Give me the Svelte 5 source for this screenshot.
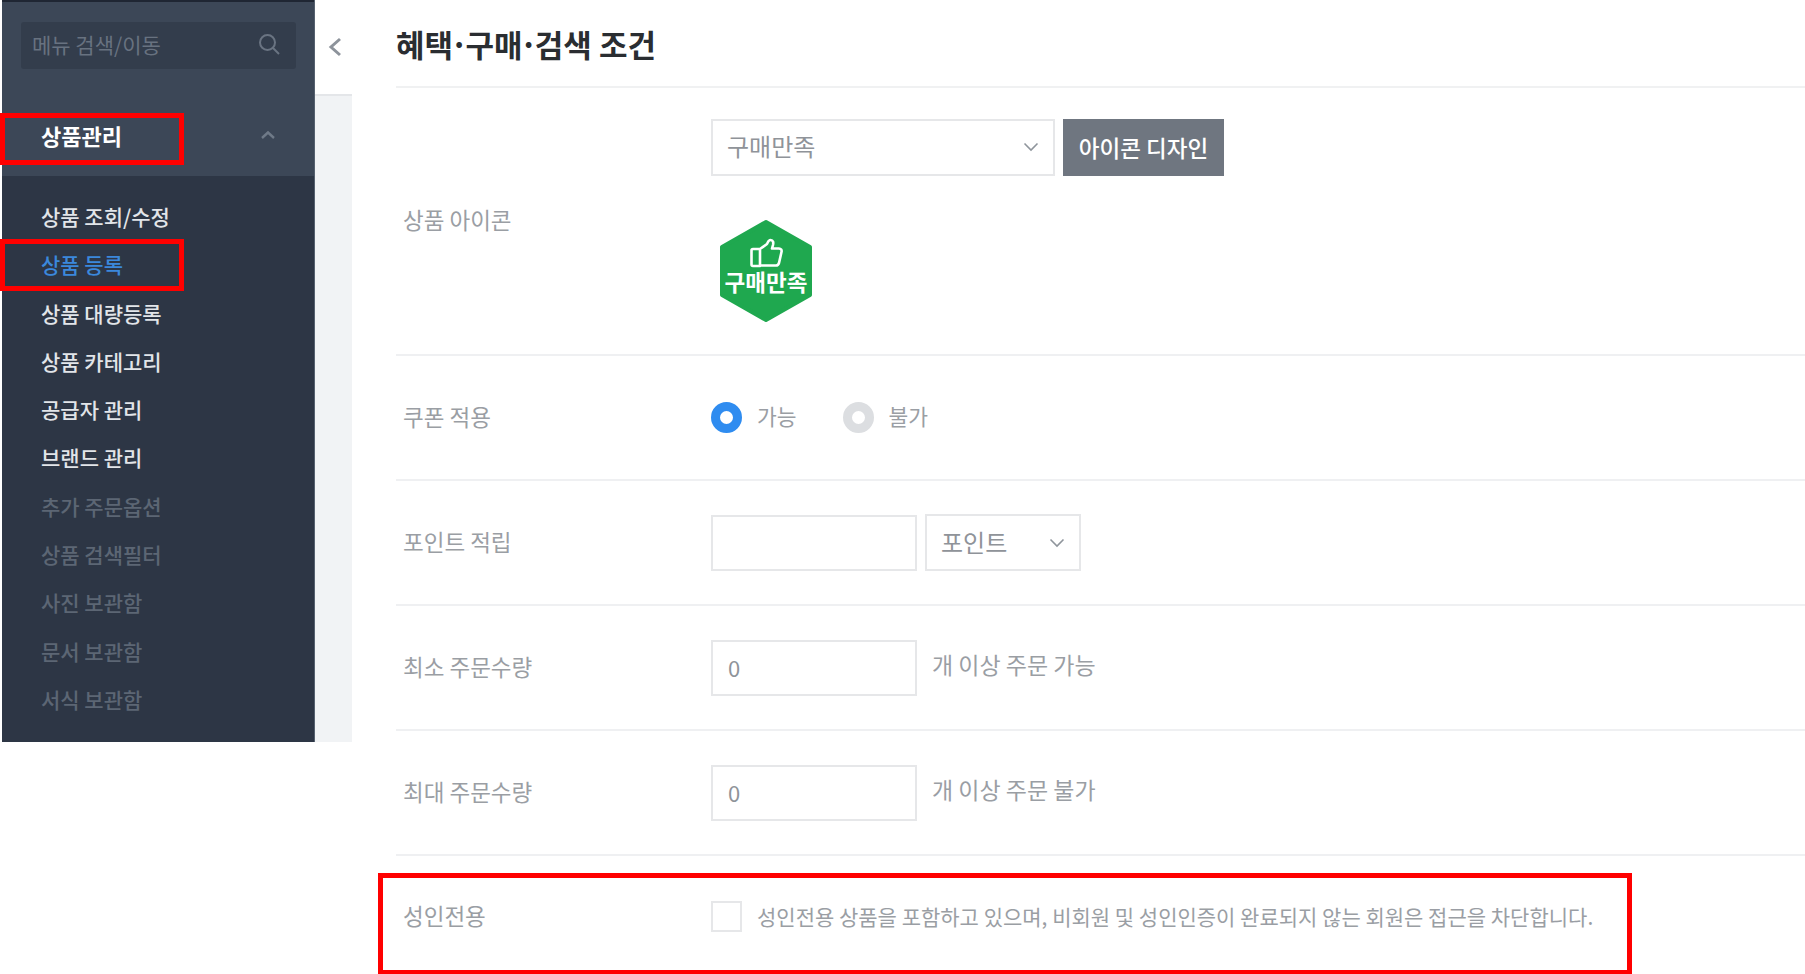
<script>
    const subMenus = [
        { name: "상품 조회/수정" },
        { name: "상품 등록", active: true },
        { name: "상품 대량등록" },
        { name: "상품 카테고리" },
        { name: "공급자 관리" },
        { name: "브랜드 관리" },
        { name: "추가 주문옵션", dim: true },
        { name: "상품 검색필터", dim: true },
        { name: "사진 보관함", dim: true },
        { name: "문서 보관함", dim: true },
        { name: "서식 보관함", dim: true }
    ];
</script>

<div class="page">
    <div class="leftCol">
        <nav class="sidebar">
            <div class="sideTop">
                <div class="search">
                    <span>메뉴 검색/이동</span>
                    <svg width="24" height="24" viewBox="0 0 24 24" fill="none" stroke="#6a7482" stroke-width="2">
                        <circle cx="10.5" cy="10.5" r="7.5" />
                        <path d="M16 16l6 6" />
                    </svg>
                </div>
                <div class="menuHead">
                    <span>상품관리</span>
                    <svg width="16" height="10" viewBox="0 0 16 10" fill="none" stroke="#6f7a88" stroke-width="2.4">
                        <path d="M2 8l6-5.5L14 8" />
                    </svg>
                </div>
            </div>
            <ul class="subMenu">
                {#each subMenus as item}
                    <li class:active={item.active} class:dim={item.dim}>{item.name}</li>
                {/each}
            </ul>
        </nav>
        <div class="collapse">
            <div class="collapseBtn">
                <svg width="14" height="22" viewBox="0 0 14 22" fill="none" stroke="#8d939b" stroke-width="3">
                    <path d="M12 3l-9 8 9 8" />
                </svg>
            </div>
            <div class="collapseRest"></div>
        </div>
        <div class="redBox menuMark"></div>
        <div class="redBox subMark"></div>
    </div>

    <main class="content">
        <h2>혜택<span class="dot">·</span>구매<span class="dot">·</span>검색 조건</h2>

        <section class="row iconRow">
            <div class="label">상품 아이콘</div>
            <div class="field stack">
                <div class="inline">
                    <div class="select wide">
                        <span>구매만족</span>
                        <svg width="16" height="10" viewBox="0 0 16 10" fill="none" stroke="#8f959c" stroke-width="1.600"><path d="M1.500 1.500L8 8l6.500-6.500" /></svg>
                    </div>
                    <button type="button" class="design">아이콘 디자인</button>
                </div>
                <svg class="badge" width="94" height="104" viewBox="0 0 94 104">
                    <polygon points="47,3 91,28 91,76 47,101 3,76 3,28" fill="#1fa84f" stroke="#1fa84f" stroke-width="4" stroke-linejoin="round" />
                    <path d="M34 30h7v17h-7a1.500 1.500 0 0 1-1.500-1.500v-14A1.500 1.500 0 0 1 34 30zM41 30l7-5c1-2 1.500-4 3.500-4 3 0 3 3 2.500 5l-1 3.500h7c2 0 3 1.500 2.500 3.500l-2.500 11c-.5 1.500-1.500 2.500-3 2.500H41" fill="none" stroke="#fff" stroke-width="2.600" stroke-linejoin="round" />
                    <text x="47" y="72" text-anchor="middle" class="badgeText">구매만족</text>
                </svg>
            </div>
        </section>

        <section class="row">
            <div class="label">쿠폰 적용</div>
            <div class="field inline">
                <span class="radio on"></span><span class="opt">가능</span>
                <span class="radio off"></span><span class="opt">불가</span>
            </div>
        </section>

        <section class="row">
            <div class="label">포인트 적립</div>
            <div class="field inline">
                <div class="input"></div>
                <div class="select narrow">
                    <span>포인트</span>
                    <svg width="16" height="10" viewBox="0 0 16 10" fill="none" stroke="#8f959c" stroke-width="1.600"><path d="M1.500 1.500L8 8l6.500-6.500" /></svg>
                </div>
            </div>
        </section>

        <section class="row">
            <div class="label">최소 주문수량</div>
            <div class="field inline">
                <div class="input"><span>0</span></div>
                <span class="hint">개 이상 주문 가능</span>
            </div>
        </section>

        <section class="row">
            <div class="label">최대 주문수량</div>
            <div class="field inline">
                <div class="input"><span>0</span></div>
                <span class="hint">개 이상 주문 불가</span>
            </div>
        </section>

        <section class="row adult">
            <div class="label">성인전용</div>
            <div class="field inline">
                <span class="check"></span>
                <span class="opt long">성인전용 상품을 포함하고 있으며, 비회원 및 성인인증이 완료되지 않는 회원은 접근을 차단합니다.</span>
            </div>
            <div class="redBox adultMark"></div>
        </section>
    </main>
</div>

<style>
    :global(body) {
        margin: 0;
        background: #fff;
        overflow: hidden;
    }
    .page {
        display: flex;
        width: 1805px;
        height: 974px;
        overflow: hidden;
        font-family: "Noto Sans CJK KR", "Noto Sans", sans-serif;
    }
    .leftCol {
        position: relative;
        display: flex;
        align-items: flex-start;
        width: 353px;
        padding-left: 2px;
        box-sizing: border-box;
        flex-shrink: 0;
    }
    .sidebar {
        width: 313px;
        height: 742px;
        background: #2d3645;
        border-right: 1px solid #56616f;
        box-sizing: border-box;
    }
    .sideTop {
        height: 176px;
        background: #3c4757;
        border-top: 2px solid #1f2633;
        box-sizing: border-box;
        padding: 20px 18px 0 19px;
    }
    .search {
        height: 47px;
        display: flex;
        align-items: center;
        justify-content: space-between;
        padding: 0 15px 4px 11px;
        box-sizing: border-box;
        background: #333d4c;
        border-radius: 3px;
        color: #687280;
        font-size: 21px;
    }
    .menuHead {
        display: flex;
        align-items: center;
        justify-content: space-between;
        margin-top: 50px;
        padding: 0 20px 0 20px;
        color: #fff;
        font-size: 22px;
        font-weight: 700;
    }
    .subMenu {
        list-style: none;
        margin: 0;
        padding: 16px 0 0 39px;
    }
    .subMenu li {
        height: 48.3px;
        line-height: 48.3px;
        color: #e2e5e9;
        font-size: 21px;
        font-weight: 500;
    }
    .subMenu li.active {
        color: #3b88dc;
    }
    .subMenu li.dim {
        color: #5c6674;
    }
    .collapse {
        width: 37px;
        height: 742px;
        display: flex;
        flex-direction: column;
    }
    .collapseBtn {
        height: 96px;
        display: flex;
        align-items: center;
        padding-left: 13px;
        box-sizing: border-box;
        border-bottom: 2px solid #e4e6e9;
    }
    .collapseRest {
        flex: 1;
        background: #f1f3f5;
    }
    .redBox {
        position: absolute;
        border: 5px solid #ff0000;
        box-sizing: border-box;
        pointer-events: none;
    }
    .menuMark {
        left: 0;
        top: 113px;
        width: 184px;
        height: 52px;
    }
    .subMark {
        left: 0;
        top: 239px;
        width: 184px;
        height: 52px;
    }
    .content {
        flex: 1;
        padding-left: 43px;
        color: #9a9ea4;
        min-width: 0;
    }
    h2 {
        margin: 0;
        height: 86px;
        line-height: 88px;
        font-size: 31px;
        font-weight: 700;
        color: #2a2d31;
        border-bottom: 2px solid #f0f1f2;
    }
    .dot {
        margin: 0 -3px;
    }
    .row {
        position: relative;
        display: flex;
        align-items: center;
        height: 125px;
        box-sizing: border-box;
        border-bottom: 2px solid #eff0f2;
        padding-left: 7px;
        font-size: 22.5px;
    }
    .iconRow {
        height: 268px;
    }
    .iconRow .label {
        margin-top: 0;
    }
    .label {
        width: 308px;
        flex-shrink: 0;
        margin-bottom: 4px;
    }
    .adult .label {
        margin-bottom: 2px;
    }
    .field {
        display: flex;
    }
    .inline {
        display: flex;
        align-items: center;
    }
    .stack {
        flex-direction: column;
        align-items: flex-start;
    }
    .select {
        height: 57px;
        display: flex;
        align-items: center;
        justify-content: space-between;
        border: 2px solid #e6e7e9;
        box-sizing: border-box;
        padding: 0 14px 3px;
        font-size: 24px;
        color: #8f9399;
    }
    .select svg {
        margin-top: 3px;
    }
    .select.wide {
        width: 344px;
        padding-bottom: 5px;
    }
    .select.narrow {
        width: 156px;
        margin-left: 8px;
    }
    .design {
        width: 161px;
        height: 57px;
        margin-left: 8px;
        padding: 0 0 2px;
        border: 0;
        background: #6f7680;
        color: #fff;
        font: inherit;
        font-size: 22.5px;
        font-weight: 500;
    }
    .badge {
        display: block;
        margin: 43px 0 0 8px;
    }
    .badgeText {
        font-size: 22.5px;
        font-weight: 700;
        fill: #fff;
    }
    .radio {
        width: 31px;
        height: 31px;
        border-radius: 50%;
        box-sizing: border-box;
    }
    .radio.on {
        border: 9px solid #2f8cf0;
    }
    .radio.off {
        border: 9px solid #dcdee1;
        margin-left: 46px;
    }
    .opt {
        margin: -4px 0 0 15px;
        font-size: 21.5px;
    }
    .opt.long {
        margin-top: 0;
        font-size: 21px;
    }
    .input {
        width: 206px;
        height: 56px;
        border: 2px solid #e6e7e9;
        box-sizing: border-box;
        display: flex;
        align-items: center;
        padding: 0 0 1px 15px;
        font-size: 22px;
        color: #8f9399;
    }
    .hint {
        margin: -8px 0 0 15px;
        font-size: 23px;
    }
    .check {
        width: 31px;
        height: 31px;
        border: 2px solid #e6e7e9;
        box-sizing: border-box;
        flex-shrink: 0;
    }
    .adult {
        height: 120px;
        border: 0;
    }
    .adultMark {
        left: -18px;
        top: 17px;
        width: 1254px;
        height: 102px;
    }
</style>
